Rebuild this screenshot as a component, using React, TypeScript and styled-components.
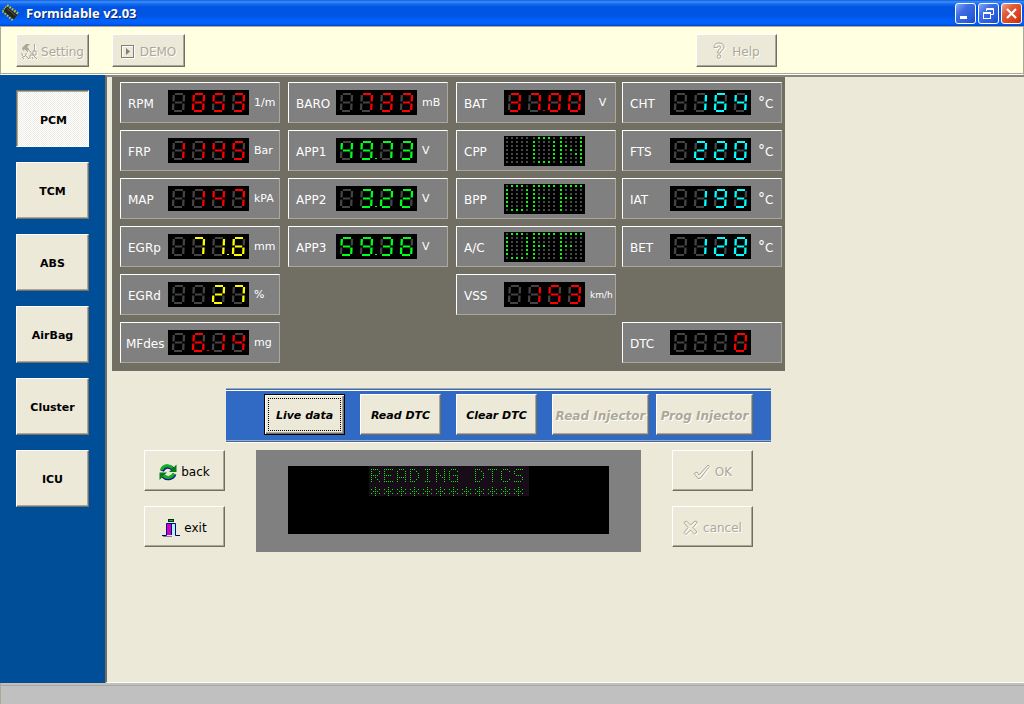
import React from "react";
import styled, { createGlobalStyle, css } from "styled-components";

const GlobalStyle = createGlobalStyle`
  *, *::before, *::after { box-sizing: border-box; }
  body {
    margin: 0;
    background: #ece9d8;
    font-family: "DejaVu Sans", Verdana, sans-serif;
    font-size: 12px;
    color: #000;
  }
  button { font-family: inherit; }
  svg { display: block; flex: none; }
`;

/* ---------- window chrome ---------- */

const Window = styled.div`
  min-height: 100vh;
  display: flex;
  flex-direction: column;
`;

const TitleBar = styled.header`
  height: 26px;
  flex: none;
  display: flex;
  align-items: center;
  gap: 6px;
  padding: 0 2px;
  background: linear-gradient(
    #0b5ce0 0%, #3c8ff8 7%, #1268ee 16%, #0054e3 28%,
    #0055e5 60%, #0262fb 80%, #0060f8 90%, #0046cc 100%
  );
`;

const Title = styled.h1`
  flex: 1;
  margin: 0;
  font: bold 13px/20px "Open Sans", sans-serif;
  color: #fff;
  text-shadow: 1px 1px #0a246a;
`;

const CaptionButtons = styled.div`
  display: flex;
  gap: 2px;
`;

const CaptionButton = styled.button<{ $close?: boolean }>`
  width: 21px;
  height: 21px;
  display: grid;
  place-items: center;
  padding: 0;
  border: 1px solid #fff;
  border-radius: 3px;
  background: ${(p) =>
    p.$close
      ? "linear-gradient(135deg, #f0a088 0%, #e25a38 35%, #d8401c 75%, #b83010 100%)"
      : "linear-gradient(135deg, #88a8f4 0%, #3e6ee4 35%, #2a5cdc 75%, #1c48c0 100%)"};
`;

const Toolbar = styled.nav`
  height: 49px;
  flex: none;
  display: flex;
  align-items: flex-start;
  gap: 23px;
  padding: 7px 15px;
  background: #ffffe1;
  border: 1px solid #aca899;
  border-bottom: 1px solid #fff;
  box-shadow: inset 0 -1px #aca899;
`;

const ToolbarRest = styled.div`
  flex: 0 1 569px;
  display: flex;
  justify-content: flex-end;
`;

const Workspace = styled.div`
  flex: 1;
  display: flex;
`;

const StatusBar = styled.footer`
  height: 21px;
  flex: none;
  background: #c0c0c0;
  border-left: 1px solid #aca899;
  box-shadow: inset 0 2px #c0c0c0, inset 0 3px #aca899;
`;

/* ---------- buttons ---------- */

const disabledText = css`
  color: #aca899;
  text-shadow: 1px 1px #fff;
`;

const RaisedButton = styled.button`
  display: flex;
  align-items: center;
  justify-content: center;
  padding: 2px 0 0;
  background: #ece9d8;
  border: 1px solid;
  border-color: #fff #716f64 #716f64 #fff;
  box-shadow: inset -1px -1px #aca899;
  color: #000;
  white-space: nowrap;
  &:disabled { ${disabledText} }
`;

const ToolButton = styled(RaisedButton)<{ $width: number; $gap: number }>`
  width: ${(p) => p.$width}px;
  height: 33px;
  gap: ${(p) => p.$gap}px;
  font-size: 12px;
`;

const ActionButton = styled(RaisedButton)`
  width: 81px;
  height: 41px;
  gap: 4px;
  font-size: 12px;
`;

const ModuleButton = styled(RaisedButton)<{ $active?: boolean }>`
  width: 73px;
  height: 57px;
  font-size: 11px;
  font-weight: bold;
  ${(p) =>
    p.$active &&
    css`
      background: repeating-conic-gradient(#fff 0% 25%, #ecebe4 0% 50%) 0 0 / 2px 2px;
      border-color: #716f64 #fff #fff #716f64;
      box-shadow: inset 1px 1px #aca899;
      padding: 3px 0 0 2px;
    `}
`;

const ModeButton = styled(RaisedButton)<{ $wide?: boolean; $focused?: boolean }>`
  width: ${(p) => (p.$wide ? 97 : 81)}px;
  height: 41px;
  font-size: ${(p) => (p.$wide ? 12 : 11)}px;
  font-weight: bold;
  font-style: italic;
  ${(p) =>
    p.$focused &&
    css`
      border-color: #000;
      box-shadow: inset 1px 1px #fff, inset -1px -1px #716f64, inset -2px -2px #aca899;
      outline: 1px dotted #000;
      outline-offset: -5px;
    `}
`;

/* ---------- layout of the workspace ---------- */

const Sidebar = styled.aside`
  width: 105px;
  flex: none;
  display: flex;
  flex-direction: column;
  gap: 15px;
  padding: 15px 16px;
  background: #004e98;
`;

const Main = styled.main`
  flex: 1;
  border-top: 2px solid #8a887a;
  border-left: 2px solid #716f64;
  border-bottom: 1px solid #fff;
  padding: 0 5px 8px;
`;

const Content = styled.div`
  max-width: 673px;
`;

const GaugePanel = styled.section`
  display: grid;
  grid-template-columns: 168px 168px 166px 160px;
  grid-auto-rows: 41px;
  row-gap: 7px;
  padding: 5px 3px 8px 8px;
  background: #716f64;
`;

const GaugeBox = styled.div<{ $col: number; $row: number }>`
  grid-column: ${(p) => p.$col};
  grid-row: ${(p) => p.$row};
  width: 160px;
  display: grid;
  grid-template-columns: 40px 81px 1fr;
  align-items: center;
  padding-left: 7px;
  background: #808080;
  border: 1px solid;
  border-color: #fff #aca899 #aca899 #fff;
  color: #fff;
  white-space: nowrap;
`;

const GaugeLabel = styled.span<{ $long?: boolean }>`
  font-size: 12px;
  line-height: 16px;
  padding-top: 2px;
  margin-left: ${(p) => (p.$long ? -2 : 0)}px;
`;

const Unit = styled.span<{ $small?: boolean; $centered?: boolean }>`
  font-size: ${(p) => (p.$small ? 9 : 11)}px;
  line-height: 16px;
  padding: 1px 0 0 5px;
  text-align: ${(p) => (p.$centered ? "center" : "left")};
`;

const DegreeUnit = styled.span`
  display: flex;
  padding: 2px 0 0 7px;
  font-size: 12px;
  line-height: 16px;
`;

const DegreeSign = styled.span`
  font-size: 14px;
  line-height: 12px;
`;

const ModeBar = styled.div`
  display: flex;
  gap: 15px;
  margin: 17px 14px 7px 114px;
  padding: 5px 18px 7px 38px;
  background: #316ac5;
  border-top: 1px solid #aca899;
  border-bottom: 1px solid #fff;
  box-shadow: inset 0 1px #316ac5, inset 0 2px #fff, inset 0 -1px #316ac5, inset 0 -2px #aca899;
`;

const ModeGroup = styled.div`
  display: flex;
  gap: 7px;
`;

const Console = styled.div`
  display: flex;
  gap: 31px;
  padding: 0 32px;
`;

const ButtonColumn = styled.div`
  display: flex;
  flex-direction: column;
  gap: 15px;
`;

const LcdFrame = styled.div`
  flex: 1;
  padding: 16px 32px 18px;
  background: #808080;
`;

const LcdScreen = styled.div`
  height: 68px;
  display: flex;
  justify-content: center;
  align-items: flex-start;
  background: #000;
`;

/* ---------- seven segment and dot matrix displays ---------- */

const SEGMENTS: Record<string, string> = {
  a: "M3 1H11",
  b: "M12 2L11.700 8.500",
  c: "M11.500 10.500L11.200 17",
  d: "M2 18H10",
  e: "M1.300 10.500L1 17",
  f: "M1.800 2L1.500 8.500",
  g: "M3 9.500H10.200",
};

const LIT: Record<string, string> = {
  "0": "abcdef",
  "1": "bc",
  "2": "abged",
  "3": "abgcd",
  "4": "fgbc",
  "5": "afgcd",
  "6": "afgedc",
  "7": "abc",
  "8": "abcdefg",
  "9": "abcdfg",
  " ": "",
};

function SevenSegment({ value, color }: { value: string; color: string }) {
  const digits = value.replace(".", "").padStart(4, " ");
  const point = value.includes(".") ? 3 - (value.length - 1 - value.indexOf(".")) : -1;
  return (
    <svg width="81" height="25" role="img" aria-label={value}>
      <rect width="81" height="25" fill="#000" />
      {digits.split("").map((d, i) => (
        <g key={i} transform={`translate(${4 + i * 20} 3)`} fill="none">
          {Object.entries(SEGMENTS)
            .sort(([p], [q]) => Number(LIT[d].includes(p)) - Number(LIT[d].includes(q)))
            .map(([name, path]) => (
              <path
                key={name}
                d={path}
                stroke={LIT[d].includes(name) ? color : "#444444"}
                strokeWidth={"adg".includes(name) ? 2 : 2.3}
              />
            ))}
        </g>
      ))}
      {point >= 0 && <rect x={19 + point * 20} y="20" width="2" height="1" fill={color} />}
    </svg>
  );
}

const DOTS: Record<string, string[]> = {
  " ": [".....", ".....", ".....", ".....", ".....", ".....", "....."],
  O: [".###.", "#...#", "#...#", "#...#", "#...#", "#...#", ".###."],
  N: ["#...#", "#...#", "##..#", "#.#.#", "#..##", "#...#", "#...#"],
  F: ["#####", "#....", "#....", "###..", "#....", "#....", "#...."],
  R: ["####.", "#...#", "#...#", "####.", "#.#..", "#..#.", "#...#"],
  E: ["#####", "#....", "#....", "####.", "#....", "#....", "#####"],
  A: [".###.", "#...#", "#...#", "#...#", "#####", "#...#", "#...#"],
  D: ["###..", "#..#.", "#...#", "#...#", "#...#", "#..#.", "###.."],
  I: [".###.", "..#..", "..#..", "..#..", "..#..", "..#..", ".###."],
  G: [".###.", "#...#", "#....", "#.###", "#...#", "#...#", ".####"],
  T: ["#####", "..#..", "..#..", "..#..", "..#..", "..#..", "..#.."],
  C: [".###.", "#...#", "#....", "#....", "#....", "#...#", ".###."],
  S: [".####", "#....", "#....", ".###.", "....#", "....#", "####."],
  "*": [".....", "..#..", "#.#.#", ".###.", "#.#.#", "..#..", "....."],
};

function DotMatrix({ value }: { value: string }) {
  return (
    <svg width="81" height="30" role="img" aria-label={value.trim()}>
      <rect width="81" height="30" fill="#000" />
      {value.split("").map((ch, i) =>
        DOTS[ch].map((row, y) =>
          row.split("").map((dot, x) => (
            <rect
              key={`${i}-${y}-${x}`}
              x={2 + i * 27 + x * 5}
              y={1 + y * 4}
              width="2"
              height="2"
              fill={dot === "#" ? "#00ff00" : "#484848"}
            />
          ))
        )
      )}
    </svg>
  );
}

function LcdText({ lines }: { lines: string[] }) {
  return (
    <svg width="160" height="30" role="img" aria-label={lines[0]}>
      <rect width="160" height="30" fill="#180c18" />
      {lines.map((line, l) =>
        line.split("").map((ch, i) =>
          DOTS[ch].map((row, y) =>
            row.split("").map((dot, x) =>
              dot === "#" ? (
                <rect
                  key={`${l}-${i}-${y}-${x}`}
                  x={2 + i * 13 + x * 2}
                  y={3 + l * 16 + y * 2}
                  width="1"
                  height="1"
                  fill="#00f000"
                />
              ) : null
            )
          )
        )
      )}
    </svg>
  );
}

/* ---------- icons ---------- */

const ChipIcon = () => (
  <svg width="18" height="18" viewBox="0 0 18 18" aria-hidden="true">
    <path d="M5 1.500L17 10.500M.8 7L11.500 16.500" stroke="#d8c800" strokeWidth="3" strokeDasharray="1.500 1.500" />
    <path d="M4 3L1 7" stroke="#d8c800" strokeWidth="2" strokeDasharray="1 1" />
    <path d="M5 2.500L15.500 11L11.500 15.500L1.500 7Z" fill="#24241c" />
    <path d="M5 4.500L13.500 11.500" stroke="#5c5c50" />
  </svg>
);

const MinimizeIcon = () => (
  <svg width="15" height="15" aria-hidden="true">
    <rect x="2" y="10" width="7" height="3" fill="#fff" />
  </svg>
);

const RestoreIcon = () => (
  <svg width="15" height="15" aria-hidden="true" fill="none" stroke="#fff">
    <path d="M5.500 5V2.500H12.500V8.500H10M5 3.500H13" />
    <rect x="2.500" y="6.500" width="7" height="6" />
    <path d="M2 7.500H10" />
  </svg>
);

const CloseIcon = () => (
  <svg width="15" height="15" aria-hidden="true">
    <path d="M3 3L12 12M12 3L3 12" stroke="#fff" strokeWidth="2.200" />
  </svg>
);

const toolsPath =
  "M4 6L7 9M7 6L13 13M13.500 1V8M12 8H15V12H12ZM1 10V12L3 14L5 12V10M5 13L8 16M1 14L3 16M9 12V16M9 12H12M11 14L12 16M13 13L16 16";
const hammerPath = "M1 5L5 1H9L6 4L8 6L6 8L4 6L2 8Z";
const ToolsIcon = () => (
  <svg width="18" height="18" aria-hidden="true" fill="none">
    <path d={toolsPath} transform="translate(1 1)" stroke="#fff" />
    <path d={toolsPath} stroke="#aca899" />
    <path d={hammerPath} fill="#aca899" />
  </svg>
);

const PlayIcon = () => (
  <svg width="14" height="14" aria-hidden="true">
    <rect x="1.500" y="1.500" width="12" height="12" fill="none" stroke="#fff" />
    <rect x=".5" y=".5" width="12" height="12" fill="none" stroke="#808078" />
    <path d="M5 3V10L9 6.500Z" fill="#808078" />
  </svg>
);

const questionPath =
  "M1 5.500C1 2 3.500 1 6 1C9 1 11 2.500 11 5C11 8 7.500 8 7.500 11H4.500C4.500 8 7.500 7 7.500 5.200C7.500 3.500 4.500 3.500 4.300 5.500Z";
const QuestionIcon = () => (
  <svg width="14" height="19" aria-hidden="true" fill="none">
    <g transform="translate(1 1)" stroke="#fff">
      <path d={questionPath} />
      <circle cx="6" cy="14.500" r="1.800" />
    </g>
    <g stroke="#aca899">
      <path d={questionPath} />
      <circle cx="6" cy="14.500" r="1.800" />
    </g>
  </svg>
);

const RefreshIcon = () => (
  <svg width="18" height="18" viewBox="0 0 18 18" aria-hidden="true" fill="none">
    <path d="M3 8C5 3 10.500 2.500 14 6" stroke="#10188c" strokeWidth="4" />
    <path d="M15.500 11C13.500 16 7.500 16.500 4 13" stroke="#10188c" strokeWidth="4" />
    <path d="M17.500 1.500V9H10Z" fill="#0a7a18" />
    <path d="M.5 17V9.500H8Z" fill="#0a7a18" />
    <path d="M2.500 7C4.500 2 10 1.500 13.500 5" stroke="#10b020" strokeWidth="3" />
    <path d="M15 10.500C13 15 8 15.500 4.500 12.500" stroke="#10b020" strokeWidth="3" />
  </svg>
);

const ExitIcon = () => (
  <svg width="18" height="18" aria-hidden="true">
    <rect x="6.500" y=".5" width="5" height="2" fill="#00c020" stroke="#003010" />
    <path d="M0 16.500H4.500V4.500H13.500V16.500H18" fill="none" stroke="#000080" />
    <rect x="5" y="5" width="4" height="11" fill="#d000c0" />
    <rect x="10" y="5" width="3" height="11" fill="#a8f4ff" />
    <path d="M9.500 4V16" stroke="#000080" />
    <path d="M1 17.500H10" stroke="#808080" />
  </svg>
);

const checkPath = "M1 9.500L4 8L6 11L15 1L16.500 2.500L7 14.500H5Z";
const CheckIcon = () => (
  <svg width="18" height="16" aria-hidden="true" fill="none">
    <path d={checkPath} transform="translate(1 1)" stroke="#fff" />
    <path d={checkPath} stroke="#aca899" />
  </svg>
);

const crossPath =
  "M1 2.500L3.500 1L7.500 5L12 1L14.500 2L10 7.500L14 12L11.500 14L7.500 10L3 14.500L1 12.500L5 7.500Z";
const CrossIcon = () => (
  <svg width="16" height="16" aria-hidden="true" fill="none">
    <path d={crossPath} transform="translate(1 1)" stroke="#fff" />
    <path d={crossPath} stroke="#aca899" />
  </svg>
);

/* ---------- data ---------- */

const RED = "#ff0000";
const GREEN = "#00ff20";
const YELLOW = "#ffff00";
const CYAN = "#00ffff";

interface Gauge {
  label: string;
  value: string;
  unit?: string;
  color?: string;
  col: number;
  row: number;
}

const gauges: Gauge[] = [
  { label: "RPM", value: "853", unit: "1/m", color: RED, col: 1, row: 1 },
  { label: "FRP", value: "1145", unit: "Bar", color: RED, col: 1, row: 2 },
  { label: "MAP", value: "147", unit: "kPA", color: RED, col: 1, row: 3 },
  { label: "EGRp", value: "71.6", unit: "mm", color: YELLOW, col: 1, row: 4 },
  { label: "EGRd", value: "27", unit: "%", color: YELLOW, col: 1, row: 5 },
  { label: "MFdes", value: "6.14", unit: "mg", color: RED, col: 1, row: 6 },
  { label: "BARO", value: "733", unit: "mB", color: RED, col: 2, row: 1 },
  { label: "APP1", value: "49.73", unit: "V", color: GREEN, col: 2, row: 2 },
  { label: "APP2", value: "3.22", unit: "V", color: GREEN, col: 2, row: 3 },
  { label: "APP3", value: "59.36", unit: "V", color: GREEN, col: 2, row: 4 },
  { label: "BAT", value: "37.00", unit: "V", color: RED, col: 3, row: 1 },
  { label: "CPP", value: " ON", col: 3, row: 2 },
  { label: "BPP", value: "OFF", col: 3, row: 3 },
  { label: "A/C", value: "OFF", col: 3, row: 4 },
  { label: "VSS", value: "153", unit: "km/h", color: RED, col: 3, row: 5 },
  { label: "CHT", value: "164", unit: "°C", color: CYAN, col: 4, row: 1 },
  { label: "FTS", value: "220", unit: "°C", color: CYAN, col: 4, row: 2 },
  { label: "IAT", value: "195", unit: "°C", color: CYAN, col: 4, row: 3 },
  { label: "BET", value: "128", unit: "°C", color: CYAN, col: 4, row: 4 },
  { label: "DTC", value: "0", color: RED, col: 4, row: 6 },
];

const modules = ["PCM", "TCM", "ABS", "AirBag", "Cluster", "ICU"];

function GaugeUnit({ unit, centered }: { unit: string; centered: boolean }) {
  if (unit === "°C") {
    return (
      <DegreeUnit>
        <DegreeSign>°</DegreeSign>C
      </DegreeUnit>
    );
  }
  return (
    <Unit $small={unit === "km/h"} $centered={centered}>
      {unit}
    </Unit>
  );
}

function GaugeCell({ label, value, unit, color, col, row }: Gauge) {
  return (
    <GaugeBox $col={col} $row={row}>
      <GaugeLabel $long={label.length > 4}>{label}</GaugeLabel>
      {color ? <SevenSegment value={value} color={color} /> : <DotMatrix value={value} />}
      {unit && <GaugeUnit unit={unit} centered={label === "BAT"} />}
    </GaugeBox>
  );
}

export default function App() {
  return (
    <Window>
      <GlobalStyle />
      <TitleBar>
        <ChipIcon />
        <Title>Formidable v2.03</Title>
        <CaptionButtons>
          <CaptionButton aria-label="Minimize"><MinimizeIcon /></CaptionButton>
          <CaptionButton aria-label="Restore"><RestoreIcon /></CaptionButton>
          <CaptionButton aria-label="Close" $close><CloseIcon /></CaptionButton>
        </CaptionButtons>
      </TitleBar>
      <Toolbar>
        <ToolButton $width={73} $gap={2} disabled><ToolsIcon />Setting</ToolButton>
        <ToolButton $width={73} $gap={5} disabled><PlayIcon />DEMO</ToolButton>
        <ToolbarRest>
          <ToolButton $width={81} $gap={5} disabled><QuestionIcon />Help</ToolButton>
        </ToolbarRest>
      </Toolbar>
      <Workspace>
        <Sidebar>
          {modules.map((name) => (
            <ModuleButton key={name} $active={name === "PCM"}>{name}</ModuleButton>
          ))}
        </Sidebar>
        <Main>
          <Content>
            <GaugePanel>
              {gauges.map((g) => (
                <GaugeCell key={g.label} {...g} />
              ))}
            </GaugePanel>
            <ModeBar>
              <ModeButton $focused>Live data</ModeButton>
              <ModeButton>Read DTC</ModeButton>
              <ModeButton>Clear DTC</ModeButton>
              <ModeGroup>
                <ModeButton $wide disabled>Read Injector</ModeButton>
                <ModeButton $wide disabled>Prog Injector</ModeButton>
              </ModeGroup>
            </ModeBar>
            <Console>
              <ButtonColumn>
                <ActionButton><RefreshIcon />back</ActionButton>
                <ActionButton><ExitIcon />exit</ActionButton>
              </ButtonColumn>
              <LcdFrame>
                <LcdScreen>
                  <LcdText lines={["READING DTCS", "************"]} />
                </LcdScreen>
              </LcdFrame>
              <ButtonColumn>
                <ActionButton disabled><CheckIcon />OK</ActionButton>
                <ActionButton disabled><CrossIcon />cancel</ActionButton>
              </ButtonColumn>
            </Console>
          </Content>
        </Main>
      </Workspace>
      <StatusBar />
    </Window>
  );
}
